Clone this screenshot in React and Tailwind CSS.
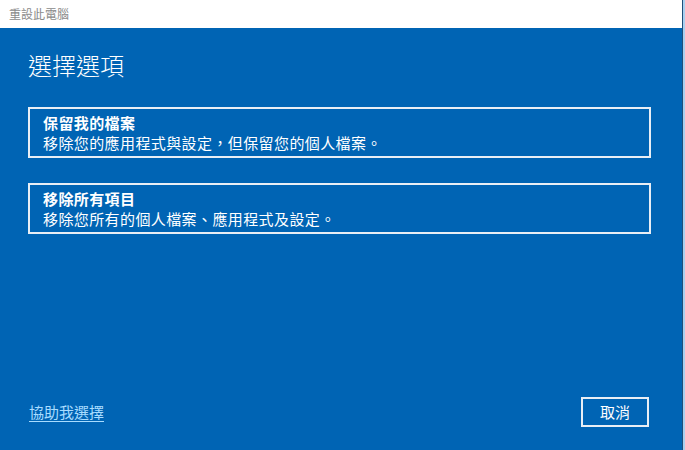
export default function App() {
  const font = { fontFamily: '"Noto Sans CJK TC", "Noto Sans", sans-serif' };
  const options = [
    { title: "保留我的檔案", desc: "移除您的應用程式與設定，但保留您的個人檔案。" },
    { title: "移除所有項目", desc: "移除您所有的個人檔案、應用程式及設定。" },
  ];

  return (
    <div className="flex h-[450px] w-[685px] overflow-hidden" style={font}>
      <div className="flex w-[682px] flex-col">
        <div className="flex h-[28px] items-center bg-white pl-[9px] text-[12px] text-[#8a8a8a]">
          重設此電腦
        </div>

        <div className="flex flex-1 flex-col bg-[#0064b4] pl-[28px] pr-[31px] text-white">
          <h1 className="mt-[21px] text-[24px] leading-[32px] font-light">選擇選項</h1>

          <div className="mt-[26px] flex flex-col gap-[25px]">
            {options.map((o) => (
              <button
                key={o.title}
                className="h-[51px] border-2 border-[#e8eef5] px-[13px] text-left text-[15px] leading-[20px] tracking-[0.4px]"
              >
                <div className="font-bold">{o.title}</div>
                <div>{o.desc}</div>
              </button>
            ))}
          </div>

          <div className="mt-auto mb-[23px] flex items-center justify-between">
            <a href="#" className="ml-[1px] text-[15px] text-[#a8dcff] underline underline-offset-[3px]">
              協助我選擇
            </a>
            <button className="mr-[2px] h-[30px] w-[68px] border-2 border-[#e8eef5] text-[15px]">
              取消
            </button>
          </div>
        </div>
      </div>
      <div className="w-[1px] bg-[#1f4f7a]" />
      <div className="w-[2px] bg-[#a9d0f0]" />
    </div>
  );
}
